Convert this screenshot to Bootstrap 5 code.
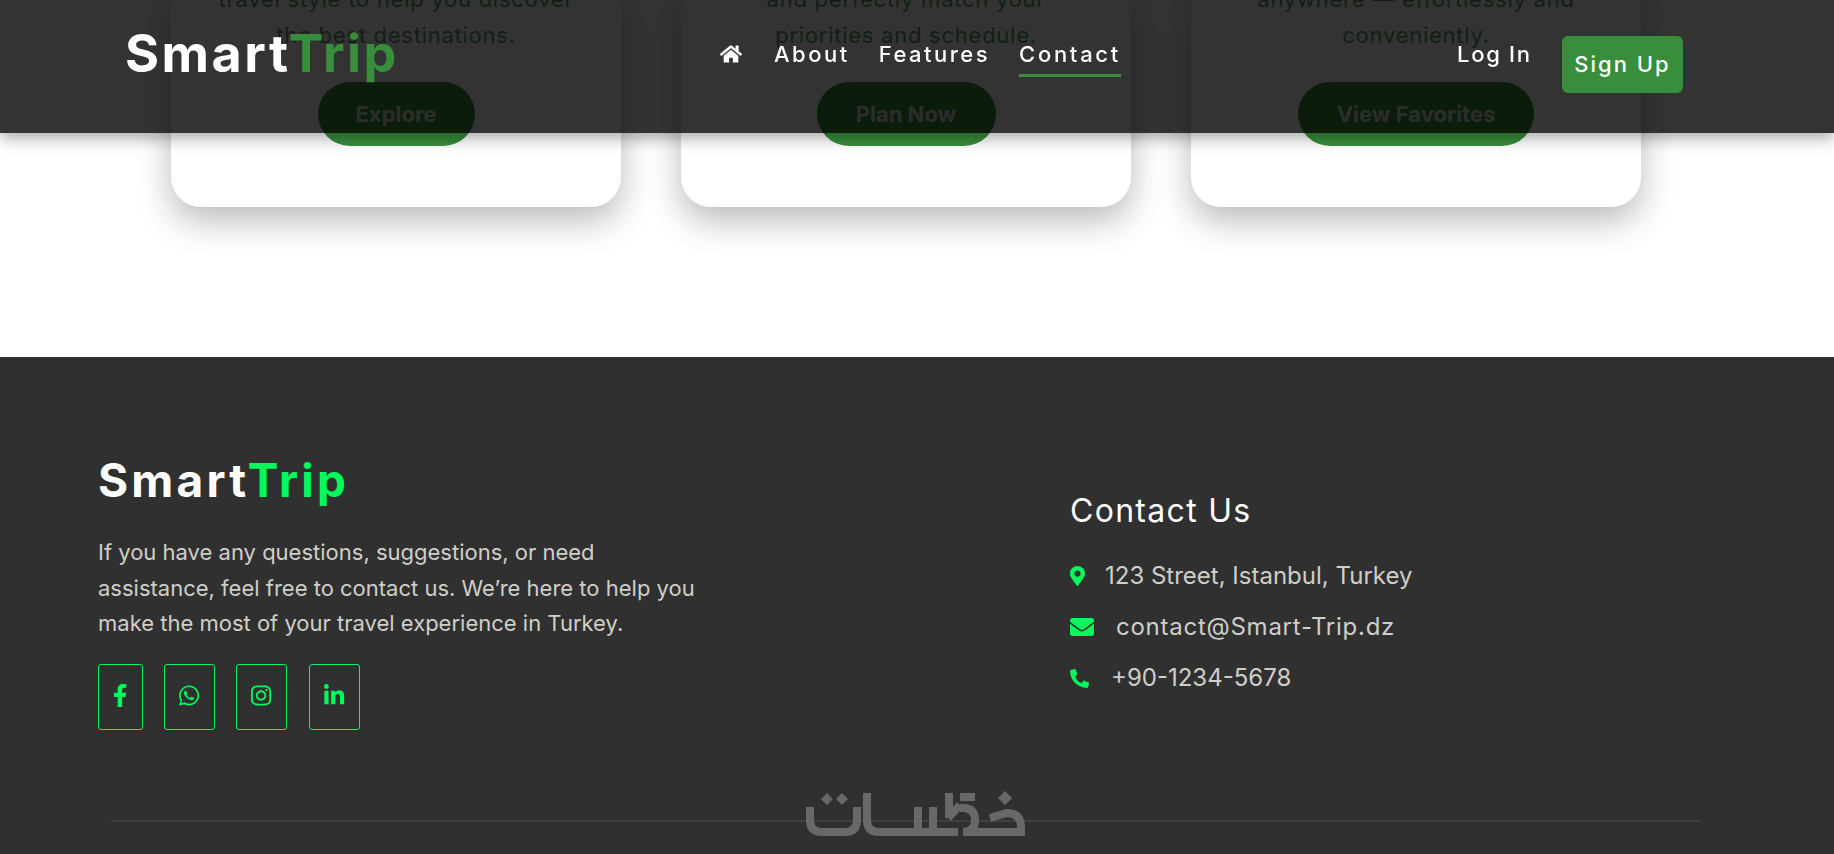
<!DOCTYPE html>
<html lang="en">
<head>
<meta charset="utf-8">
<title>SmartTrip</title>
<link href="https://cdn.jsdelivr.net/npm/bootstrap@5.3.0/dist/css/bootstrap.min.css" rel="stylesheet">
<style>
html,body{height:854px;overflow:hidden;background:#fff;}
body{font-family:"Inter","Noto Sans",sans-serif;}
.st-stage{height:357px;overflow:hidden;padding-left:171px;padding-bottom:150px;}
.st-cards{gap:60px;}
.st-card{width:450px;background:#fff;border-radius:30px;padding:0 20px 61px;box-shadow:0 14px 34px rgba(0,0,0,.27);text-align:center;}
.st-card p{font-size:22px;letter-spacing:.75px;line-height:36px;color:#5a9a6a;margin:0 0 29px;white-space:nowrap;}
.st-pill{display:inline-block;height:64px;line-height:64px;padding:0;background:#388e3c;color:#ddd;font-weight:700;font-size:22px;border-radius:32px;}
.st-w1{width:157px}.st-w2{width:179px}.st-w3{width:236px}
.st-nav{height:133px;background:rgba(0,0,0,.8);box-shadow:0 5px 15px rgba(0,0,0,.35);padding:0;align-items:flex-start;flex-wrap:nowrap;justify-content:flex-start;}
.st-brand{font-size:52px;font-weight:700;line-height:60px;color:#fff;margin:24px 0 0 125px;letter-spacing:2.5px;}
.st-brand span{color:#388e3c;}
.st-links{position:absolute;left:720px;top:36px;gap:29px;align-items:flex-start;}
.st-link{color:#fff;font-size:22px;font-weight:500;letter-spacing:2.5px;line-height:36px;text-decoration:none;display:block;padding-bottom:2px;border-bottom:3px solid transparent;}
.st-link.is-on{border-bottom-color:#388e3c;letter-spacing:2.7px;}
.st-home{width:22px;height:20px;fill:#fff;display:block;margin:8px 3px 0 0;}
.st-login{position:absolute;left:1457px;top:36px;color:#fff;font-size:22px;font-weight:500;letter-spacing:1.7px;line-height:36px;text-decoration:none;}
.st-signup{position:absolute;left:1562px;top:36px;width:121px;height:57px;background:#388e3c;border:0;border-radius:6px;color:#fff;font-size:22px;font-weight:500;letter-spacing:2px;padding:0;}
.st-foot{height:497px;background:#303030;padding:95px 0 0 98px;position:relative;overflow:hidden;}
.st-left{width:972px;}
.st-flogo{font-size:46px;font-weight:700;line-height:56px;color:#fff;letter-spacing:3.2px;margin:0 0 27px;}
.st-flogo span{color:#00f95b;}
.st-about{font-size:22px;line-height:35.7px;color:#cfcfc9;white-space:nowrap;margin:0 0 22px;}
.st-socials a{display:flex;align-items:center;justify-content:center;height:66px;border:1px solid #00f95b;border-radius:3px;margin-right:21px;}
.st-socials a.st-gap{margin-right:22px;}
.st-socials svg{fill:#00f95b;height:23px;margin-bottom:3px;}
.st-s1{width:45px}.st-s2{width:51px}
.st-h{font-size:32px;font-weight:400;letter-spacing:1.3px;color:#fff;line-height:40px;margin:39px 0 27px;}
.st-row{color:#cfcfc9;font-size:24px;line-height:36px;margin-bottom:15px;height:36px;}
.st-row svg{fill:#00f95b;flex:none;}
.st-mail{letter-spacing:.75px;}
.st-i1{width:15px;height:20px;margin-right:20px;}
.st-i2{width:24px;height:24px;margin-right:22px;}
.st-i3{width:19px;height:19px;margin-right:22px;transform:scaleX(-1);}
.st-rule{position:absolute;left:111px;width:1589px;top:463px;height:2px;background:#414141;}
.st-mark{position:absolute;left:800px;top:428px;width:240px;height:60px;fill:none;stroke:#686868;stroke-width:8;}
.st-mark .st-dot{fill:#686868;stroke:none;}
</style>
</head>
<body>
<nav class="navbar fixed-top st-nav">
  <a class="st-brand text-decoration-none" href="#">Smart<span>Trip</span></a>
  <div class="d-flex st-links">
    <a href="#" aria-label="Home"><svg class="st-home" viewBox="0 0 576 512"><path d="M280.37 148.26L96 300.11V464a16 16 0 0 0 16 16l112.06-.29a16 16 0 0 0 15.92-16V368a16 16 0 0 1 16-16h64a16 16 0 0 1 16 16v95.64a16 16 0 0 0 16 16.05L464 480a16 16 0 0 0 16-16V300L295.67 148.26a12.19 12.19 0 0 0-15.3 0zM571.6 251.47L488 182.56V44.05a12 12 0 0 0-12-12h-56a12 12 0 0 0-12 12v72.61L318.47 43a48 48 0 0 0-61 0L4.34 251.47a12 12 0 0 0-1.6 16.9l25.5 31A12 12 0 0 0 45.15 301l235.22-193.74a12.19 12.19 0 0 1 15.3 0L530.9 301a12 12 0 0 0 16.9-1.6l25.5-31a12 12 0 0 0-1.7-16.93z"/></svg></a>
    <a class="st-link" href="#">About</a>
    <a class="st-link" href="#">Features</a>
    <a class="st-link is-on" href="#">Contact</a>
  </div>
  <a class="st-login" href="#">Log In</a>
  <button class="btn st-signup" type="button">Sign Up</button>
</nav>

<section class="st-stage d-flex flex-column justify-content-end">
  <div class="d-flex st-cards">
    <div class="st-card"><p>travel style to help you discover<br>the best destinations.</p><a class="st-pill st-w1 text-decoration-none">Explore</a></div>
    <div class="st-card"><p>and perfectly match your<br>priorities and schedule.</p><a class="st-pill st-w2 text-decoration-none">Plan Now</a></div>
    <div class="st-card"><p>anywhere — effortlessly and<br>conveniently.</p><a class="st-pill st-w3 text-decoration-none">View Favorites</a></div>
  </div>
</section>

<footer class="st-foot d-flex">
  <div class="st-left">
    <div class="st-flogo">Smart<span>Trip</span></div>
    <p class="st-about">If you have any questions, suggestions, or need<br>assistance, feel free to contact us. We’re here to help you<br>make the most of your travel experience in Turkey.</p>
    <div class="d-flex st-socials">
      <a class="st-s1" href="#" aria-label="Facebook"><svg viewBox="0 0 320 512"><path d="M279.14 288l14.22-92.66h-88.91v-60.13c0-25.35 12.42-50.06 52.24-50.06h40.42V6.26S260.43 0 225.36 0c-73.22 0-121.08 44.38-121.08 124.72v70.62H22.89V288h81.39v224h100.17V288z"/></svg></a>
      <a class="st-s2" href="#" aria-label="WhatsApp"><svg viewBox="0 0 448 512"><path d="M380.9 97.1C339 55.1 283.2 32 223.9 32c-122.4 0-222 99.6-222 222 0 39.1 10.2 77.3 29.6 111L0 480l117.7-30.9c32.4 17.7 68.9 27 106.1 27h.1c122.3 0 224.1-99.6 224.1-222 0-59.3-25.2-115-67.1-157zm-157 341.6c-33.2 0-65.7-8.9-94-25.7l-6.7-4-69.8 18.3L72 359.2l-4.4-7c-18.5-29.4-28.2-63.3-28.2-98.2 0-101.7 82.8-184.5 184.6-184.5 49.3 0 95.6 19.2 130.4 54.1 34.8 34.9 56.2 81.2 56.1 130.5 0 101.8-84.9 184.6-186.6 184.6zm101.2-138.2c-5.5-2.8-32.8-16.2-37.9-18-5.1-1.9-8.8-2.8-12.5 2.8-3.7 5.6-14.3 18-17.6 21.8-3.2 3.7-6.5 4.2-12 1.4-32.6-16.3-54-29.1-75.5-66-5.7-9.8 5.7-9.1 16.3-30.3 1.8-3.7.9-6.9-.5-9.7-1.4-2.8-12.5-30.1-17.1-41.2-4.5-10.8-9.1-9.3-12.5-9.5-3.2-.2-6.9-.2-10.6-.2-3.7 0-9.7 1.4-14.8 6.9-5.1 5.6-19.4 19-19.4 46.3 0 27.3 19.9 53.7 22.6 57.4 2.8 3.7 39.1 59.7 94.8 83.8 35.2 15.2 49 16.5 66.6 13.9 10.7-1.6 32.8-13.4 37.4-26.4 4.6-13 4.6-24.1 3.2-26.4-1.3-2.5-5-3.9-10.5-6.6z"/></svg></a>
      <a class="st-s2 st-gap" href="#" aria-label="Instagram"><svg viewBox="0 0 448 512"><path d="M224.1 141c-63.6 0-114.9 51.3-114.9 114.9s51.3 114.9 114.9 114.9S339 319.5 339 255.9 287.7 141 224.1 141zm0 189.6c-41.1 0-74.7-33.5-74.7-74.7s33.5-74.7 74.7-74.7 74.7 33.5 74.7 74.7-33.6 74.7-74.7 74.7zm146.4-194.3c0 14.9-12 26.8-26.8 26.8-14.9 0-26.8-12-26.8-26.8s12-26.8 26.8-26.8 26.8 12 26.8 26.8zm76.1 27.2c-1.7-35.9-9.9-67.7-36.2-93.9-26.2-26.2-58-34.4-93.9-36.2-37-2.1-147.9-2.1-184.9 0-35.8 1.7-67.6 9.9-93.9 36.1s-34.4 58-36.2 93.9c-2.1 37-2.1 147.9 0 184.9 1.7 35.9 9.9 67.7 36.2 93.9s58 34.4 93.9 36.2c37 2.1 147.9 2.1 184.9 0 35.9-1.7 67.7-9.9 93.9-36.2 26.2-26.2 34.4-58 36.2-93.9 2.1-37 2.1-147.8 0-184.8zM398.8 388c-7.8 19.6-22.9 34.7-42.6 42.6-29.5 11.7-99.5 9-132.1 9s-102.7 2.6-132.1-9c-19.6-7.8-34.7-22.9-42.6-42.6-11.7-29.5-9-99.5-9-132.1s-2.6-102.7 9-132.1c7.8-19.6 22.9-34.7 42.6-42.6 29.5-11.7 99.5-9 132.1-9s102.7-2.6 132.1 9c19.6 7.8 34.7 22.9 42.6 42.6 11.7 29.5 9 99.5 9 132.1s2.7 102.7-9 132.1z"/></svg></a>
      <a class="st-s2" href="#" aria-label="LinkedIn"><svg viewBox="0 0 448 512"><path d="M100.28 448H7.4V148.9h92.88zM53.79 108.1C24.09 108.1 0 83.5 0 53.8a53.79 53.79 0 0 1 107.58 0c0 29.7-24.1 54.3-53.79 54.3zM447.9 448h-92.68V302.4c0-34.7-.7-79.2-48.29-79.2-48.29 0-55.69 37.7-55.69 76.7V448h-92.78V148.9h89.08v40.8h1.3c12.4-23.5 42.69-48.3 87.88-48.3 94 0 111.28 61.9 111.28 142.3V448z"/></svg></a>
    </div>
  </div>
  <div>
    <h2 class="st-h">Contact Us</h2>
    <div class="st-row d-flex align-items-center"><svg class="st-i1" viewBox="0 0 384 512"><path d="M172.268 501.67C26.97 291.031 0 269.413 0 192 0 85.961 85.961 0 192 0s192 85.961 192 192c0 77.413-26.97 99.031-172.268 309.67-9.535 13.774-29.93 13.773-39.464 0zM192 272c44.183 0 80-35.817 80-80s-35.817-80-80-80-80 35.817-80 80 35.817 80 80 80z"/></svg>123 Street, Istanbul, Turkey</div>
    <div class="st-row d-flex align-items-center st-mail"><svg class="st-i2" viewBox="0 0 512 512"><path d="M502.3 190.8c3.9-3.1 9.7-.2 9.7 4.7V400c0 26.5-21.5 48-48 48H48c-26.5 0-48-21.5-48-48V195.6c0-5 5.7-7.8 9.7-4.7 22.4 17.4 52.1 39.5 154.1 113.6 21.1 15.4 56.7 47.8 92.2 47.6 35.7.3 72-32.8 92.3-47.6 102-74.1 131.6-96.3 154-113.7zM256 320c23.2.4 56.6-29.2 73.4-41.4 132.7-96.3 142.8-104.7 173.4-128.7 5.8-4.5 9.2-11.5 9.2-18.9v-19c0-26.5-21.5-48-48-48H48C21.5 64 0 85.5 0 112v19c0 7.4 3.4 14.3 9.2 18.9 30.6 23.9 40.7 32.4 173.4 128.7 16.8 12.2 50.2 41.8 73.4 41.4z"/></svg>contact@Smart-Trip.dz</div>
    <div class="st-row d-flex align-items-center"><svg class="st-i3" viewBox="0 0 512 512"><path d="M493.4 24.6l-104-24c-11.3-2.6-22.9 3.3-27.5 13.9l-48 112c-4.2 9.8-1.4 21.3 6.9 28l60.6 49.6c-36 76.7-98.9 140.5-177.2 177.2l-49.6-60.6c-6.8-8.3-18.2-11.1-28-6.9l-112 48C3.9 366.5-2 378.1.6 389.4l24 104C27.1 504.2 36.7 512 48 512c256.1 0 464-207.5 464-464 0-11.2-7.7-20.9-18.6-23.4z"/></svg>+90-1234-5678</div>
  </div>
  <div class="st-rule"></div>
  <svg class="st-mark" viewBox="0 0 240 60" role="img" aria-label="Khamsat logo">
    <path class="st-dot" d="M27 8l6 6-6 6-6-6zM42 8l6 6-6 6-6-6zM205 6l7 7-7 7-7-7z"/>
    <path d="M10 22V35Q10 47 22 47H45Q57 47 57 35V22"/>
    <path d="M67 8V35Q67 47 79 47H158"/>
    <path d="M118 44V22M133 44V22"/>
    <path d="M149 8V33M160 12H175M160 23H163Q175 23 175 35Q175 47 163 47"/>
    <path d="M165 47H221V42Q221 28 207 28L190 33"/>
    <path d="M148 33L160 20"/>
  </svg>
</footer>
</body>
</html>
